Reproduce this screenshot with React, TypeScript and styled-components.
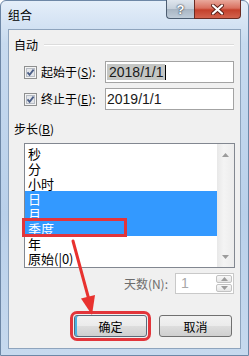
import React from "react";
import styled, { createGlobalStyle } from "styled-components";

const GlobalStyle = createGlobalStyle`
  html, body {
    margin: 0;
    padding: 0;
    background: #ffffff;
  }
  body {
    font-family: "Noto Sans CJK SC", "Liberation Sans", sans-serif;
    color: #000;
  }
`;

const units = ["秒", "分", "小时", "日", "月", "季度", "年", "原始(|0)"];
const selectedUnits = ["日", "月", "季度"];

function CheckMark() {
  return (
    <svg width="13" height="13" viewBox="0 0 13 13">
      <rect x="0.5" y="0.5" width="12" height="12" fill="#f4f4f4" stroke="#8e8f8f" />
      <rect x="2.5" y="2.5" width="8" height="8" fill="#e4e6ea" stroke="#b7bcc4" />
      <path d="M3.5 6.3 L5.6 8.8 L9.6 3.6" fill="none" stroke="#4b5e86" strokeWidth="1.8" />
    </svg>
  );
}

function Triangle({ up }: { up: boolean }) {
  return (
    <svg width="7" height="4" viewBox="0 0 7 4">
      <path d={up ? "M0 4 L3.5 0 L7 4 Z" : "M0 0 L3.5 4 L7 0 Z"} fill="#9c9c9c" />
    </svg>
  );
}

export default function App() {
  return (
    <>
      <GlobalStyle />
      <Window>
        <TitleBar>
          <Title>组合</Title>
          <Caption>
            <HelpButton>?</HelpButton>
            <CloseButton>
              <svg width="13" height="11" viewBox="0 0 13 11">
                <path
                  d="M2 1.5 L11 9.5 M11 1.5 L2 9.5"
                  stroke="#5a1f18"
                  strokeWidth="4"
                  strokeLinecap="round"
                />
                <path
                  d="M2 1.5 L11 9.5 M11 1.5 L2 9.5"
                  stroke="#ffffff"
                  strokeWidth="2.2"
                  strokeLinecap="round"
                />
              </svg>
            </CloseButton>
          </Caption>
        </TitleBar>

        <Client>
          <GroupHeader>
            <span>自动</span>
            <GroupLine />
          </GroupHeader>

          <FieldRow $top={8}>
            <CheckMark />
            <FieldLabel>
              起始于(<u>S</u>):
            </FieldLabel>
            <TextBox>
              <Selected>2018/1/1</Selected>
              <Caret />
            </TextBox>
          </FieldRow>

          <FieldRow $top={5}>
            <CheckMark />
            <FieldLabel>
              终止于(<u>E</u>):
            </FieldLabel>
            <TextBox>2019/1/1</TextBox>
          </FieldRow>

          <StepLabel>
            步长(<u>B</u>)
          </StepLabel>

          <ListBox>
            <Items>
              {units.map((u) => (
                <Item key={u} $selected={selectedUnits.includes(u)}>
                  {u}
                </Item>
              ))}
            </Items>
            <ScrollTrack>
              <Triangle up />
              <Triangle up={false} />
            </ScrollTrack>
          </ListBox>

          <SpinRow>
            <SpinLabel>天数(N):</SpinLabel>
            <SpinBox>
              <SpinValue>1</SpinValue>
              <SpinButtons>
                <SpinButton>
                  <Triangle up />
                </SpinButton>
                <SpinButton>
                  <Triangle up={false} />
                </SpinButton>
              </SpinButtons>
            </SpinBox>
          </SpinRow>

          <ButtonRow>
            <PushButton $isDefault>确定</PushButton>
            <PushButton>取消</PushButton>
          </ButtonRow>

          <Callout />
          <Arrow width="233" height="321" viewBox="0 0 233 321">
            <path d="M64 211 L79.5 268" stroke="#e8322f" strokeWidth="3" strokeLinecap="round" />
            <path d="M83 285 L86 265 L72 268.5 Z" fill="#e8322f" />
          </Arrow>
        </Client>
      </Window>
    </>
  );
}

const Window = styled.div`
  width: 249px;
  height: 356px;
  box-sizing: border-box;
  display: flex;
  flex-direction: column;
  padding: 0 7px 6px 7px;
  border: 1px solid #6d87a6;
  border-radius: 6px 6px 0 0;
  background: linear-gradient(180deg, #e4eef9 0%, #c7daef 12%, #b9d0ea 60%, #c6d9ee 100%);
`;

const TitleBar = styled.div`
  height: 28px;
  display: flex;
  align-items: flex-start;
  justify-content: space-between;
`;

const Title = styled.div`
  font-size: 12px;
  line-height: 16px;
  margin-top: 6px;
  color: #000;
`;

const Caption = styled.div`
  display: flex;
  margin-top: -1px;
`;

const CaptionButton = styled.div`
  height: 19px;
  box-sizing: border-box;
  display: flex;
  align-items: center;
  justify-content: center;
  border: 1px solid #4d5d71;
  border-top: none;
`;

const HelpButton = styled(CaptionButton)`
  width: 28px;
  border-radius: 0 0 0 4px;
  border-right: none;
  background: linear-gradient(180deg, #dfe6ee 0%, #c6d0db 48%, #a8b5c3 52%, #bfccd9 100%);
  font: bold 13px "Liberation Sans", sans-serif;
  color: #ffffff;
  text-shadow: 0 0 2px #2e3a48, 0 0 1px #2e3a48;
`;

const CloseButton = styled(CaptionButton)`
  width: 47px;
  border-radius: 0 0 4px 0;
  border-color: #6a2b22;
  background: linear-gradient(180deg, #e9a99c 0%, #d9705f 45%, #c4402b 55%, #d2634e 100%);
`;

const Client = styled.div`
  position: relative;
  flex: 1;
  display: flex;
  flex-direction: column;
  border: 1px solid #8ea4bd;
  background: #f0f0f0;
  padding: 0 6px 0 5px;
`;

const GroupHeader = styled.div`
  display: flex;
  align-items: center;
  gap: 6px;
  margin-top: 7px;
  font-size: 12px;
  line-height: 16px;
`;

const GroupLine = styled.div`
  flex: 1;
  height: 1px;
  background: #dcdcdc;
  border-bottom: 1px solid #ffffff;
`;

const FieldRow = styled.div<{ $top: number }>`
  display: flex;
  align-items: center;
  height: 22px;
  margin-top: ${(p) => p.$top}px;
  padding-left: 10px;

  svg {
    flex: none;
  }
`;

const FieldLabel = styled.div`
  margin-left: 4px;
  font-size: 12px;
  line-height: 16px;

  u {
    text-underline-offset: 1px;
  }
`;

const TextBox = styled.div`
  margin-left: auto;
  width: 129px;
  height: 22px;
  box-sizing: border-box;
  display: flex;
  align-items: center;
  padding-left: 1px;
  border: 1px solid #a3a3a3;
  background: #ffffff;
  font: 14px "Liberation Sans", sans-serif;
  color: #1a1a1a;
`;

const Selected = styled.span`
  background: #c4c6c4;
  padding: 0 1px 0 2px;
  line-height: 16px;
`;

const Caret = styled.span`
  width: 1px;
  height: 15px;
  background: #000;
`;

const StepLabel = styled.div`
  margin-top: 11px;
  font-size: 12px;
  line-height: 16px;

  u {
    text-underline-offset: 1px;
  }
`;

const ListBox = styled.div`
  margin: 6px 0 0 10px;
  width: 211px;
  height: 125px;
  box-sizing: border-box;
  display: flex;
  border: 1px solid #828790;
  background: #ffffff;
`;

const Items = styled.div`
  flex: 1;
  padding-top: 2px;
`;

const Item = styled.div<{ $selected: boolean }>`
  height: 15px;
  line-height: 15px;
  padding-left: 3px;
  font-size: 13px;
  color: ${(p) => (p.$selected ? "#ffffff" : "#000000")};
  background: ${(p) => (p.$selected ? "#3399ff" : "transparent")};
`;

const ScrollTrack = styled.div`
  width: 17px;
  display: flex;
  flex-direction: column;
  align-items: center;
  justify-content: space-between;
  padding: 9px 0 8px;
  background: linear-gradient(90deg, #e8e8e8, #f4f4f4 40%, #ececec);
`;

const SpinRow = styled.div`
  display: flex;
  align-items: center;
  justify-content: flex-end;
  gap: 7px;
  margin-top: 5px;
  height: 21px;
`;

const SpinLabel = styled.div`
  font-size: 12px;
  line-height: 16px;
  color: #6d6d6d;
`;

const SpinBox = styled.div`
  width: 59px;
  height: 21px;
  box-sizing: border-box;
  display: flex;
  border: 1px solid #c9c9c9;
  background: #ffffff;
`;

const SpinValue = styled.div`
  flex: 1;
  padding-left: 5px;
  font: 14px/19px "Liberation Sans", sans-serif;
  color: #a8a8a8;
`;

const SpinButtons = styled.div`
  width: 16px;
  display: flex;
  flex-direction: column;
  gap: 1px;
  padding: 1px 1px 1px 0;
`;

const SpinButton = styled.div`
  flex: 1;
  display: flex;
  align-items: center;
  justify-content: center;
  border: 1px solid #c2c2c2;
  border-radius: 2px;
  background: linear-gradient(180deg, #f8f8f8, #e6e6e6);
`;

const ButtonRow = styled.div`
  display: flex;
  justify-content: flex-end;
  gap: 12px;
  margin-top: 21px;
  padding-right: 2px;
`;

const PushButton = styled.div<{ $isDefault?: boolean }>`
  width: 73px;
  height: 22px;
  box-sizing: border-box;
  display: flex;
  align-items: center;
  justify-content: center;
  border: 1px solid ${(p) => (p.$isDefault ? "#5a6a7a" : "#707070")};
  border-radius: 3px;
  font-size: 12px;
  color: #000;
  background: linear-gradient(180deg, #f2f2f2 0%, #ebebeb 48%, #dddddd 52%, #cfcfcf 100%);
  box-shadow: ${(p) => (p.$isDefault ? "inset 2px 0 0 #48b3e3" : "none")};
  outline: ${(p) => (p.$isDefault ? "3px solid #e2353b" : "none")};
  outline-offset: 1px;
`;

const Callout = styled.div`
  position: absolute;
  left: 13px;
  top: 188px;
  width: 105px;
  height: 19px;
  box-sizing: border-box;
  border: 3px solid #e2353b;
  pointer-events: none;
`;

const Arrow = styled.svg`
  position: absolute;
  left: 0;
  top: 0;
  pointer-events: none;
`;
